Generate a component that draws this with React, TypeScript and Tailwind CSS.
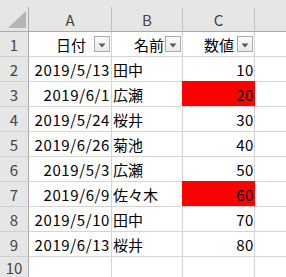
import React from "react";

const FONT = '"Noto Sans CJK JP", "DejaVu Sans", sans-serif';

type Row = { date: string; name: string; value: string; red: boolean };

const rows: Row[] = [
  { date: "2019/5/13", name: "田中", value: "10", red: false },
  { date: "2019/6/1", name: "広瀬", value: "20", red: true },
  { date: "2019/5/24", name: "桜井", value: "30", red: false },
  { date: "2019/6/26", name: "菊池", value: "40", red: false },
  { date: "2019/5/3", name: "広瀬", value: "50", red: false },
  { date: "2019/6/9", name: "佐々木", value: "60", red: true },
  { date: "2019/5/10", name: "田中", value: "70", red: false },
  { date: "2019/6/13", name: "桜井", value: "80", red: false },
];

function FilterButton() {
  return (
    <div className="mr-px flex h-[16px] w-[16px] shrink-0 items-center justify-center border border-[#ababab] bg-gradient-to-b from-[#fafafa] to-[#e9e9e9] pt-[2px]">
      <svg width="8" height="5" viewBox="0 0 8 5">
        <polygon points="0.5,0.5 7.5,0.5 4,4.5" fill="#595959" />
      </svg>
    </div>
  );
}

export default function App() {
  const headCell =
    "flex items-center justify-center border-r border-b border-r-[#c2c2c2] border-b-[#ababab] bg-[#e6e6e6] text-[15px] text-[#444]";
  const rowHead =
    "flex items-center justify-center border-r border-b border-r-[#ababab] border-b-[#cfcfcf] bg-[#e6e6e6] text-[15px] text-[#444]";
  const cell = "border-r border-b border-[#d4d4d4] bg-white text-[15px] text-black";

  return (
    <div
      className="h-[277px] w-[286px] overflow-hidden bg-[#e6e6e6]"
      style={{ fontFamily: FONT }}
    >
      <div className="h-[7px] bg-[#e6e6e6]" />
      <div className="grid grid-cols-[29px_83px_71px_72px_32px] auto-rows-[25px] leading-none">
        {/* column header row */}
        <div className="relative border-r border-b border-r-[#ababab] border-b-[#ababab] bg-[#e6e6e6]">
          <svg className="absolute left-[8px] top-[4px]" width="18" height="17" viewBox="0 0 18 17">
            <polygon points="0,17 18,17 18,0" fill="#b5b5b5" />
          </svg>
        </div>
        <div className={headCell}>A</div>
        <div className={headCell}>B</div>
        <div className={headCell}>C</div>
        <div className={headCell}></div>

        {/* row 1: field headers */}
        <div className={rowHead}>1</div>
        <div className={`${cell} flex items-center justify-end`}>
          <span className="mr-[8px]">日付</span>
          <FilterButton />
        </div>
        <div className={`${cell} flex items-center justify-end`}>
          <span className="mr-[1px]">名前</span>
          <FilterButton />
        </div>
        <div className={`${cell} flex items-center justify-end`}>
          <span className="mr-[3px]">数値</span>
          <FilterButton />
        </div>
        <div className={cell}></div>

        {rows.map((r, i) => (
          <React.Fragment key={i}>
            <div className={rowHead}>{i + 2}</div>
            <div className={`${cell} flex items-center justify-end pr-[1px] tracking-[0.6px]`}>{r.date}</div>
            <div className={`${cell} flex items-center justify-start pl-[1px]`}>{r.name}</div>
            {r.red ? (
              <div className="-ml-px -mt-px flex items-center justify-end border-r border-b border-r-[#ff0000] border-b-[#d4d4d4] bg-[#ff0000] pt-px text-[15px] tracking-[0.6px] text-black">
                {r.value}
              </div>
            ) : (
              <div className={`${cell} flex items-center justify-end tracking-[0.6px]`}>{r.value}</div>
            )}
            <div className={cell}></div>
          </React.Fragment>
        ))}

        {/* row 10 */}
        <div className={`${rowHead} items-start pt-[3px]`}>10</div>
        <div className={cell}></div>
        <div className={cell}></div>
        <div className={cell}></div>
        <div className={cell}></div>
      </div>
    </div>
  );
}
